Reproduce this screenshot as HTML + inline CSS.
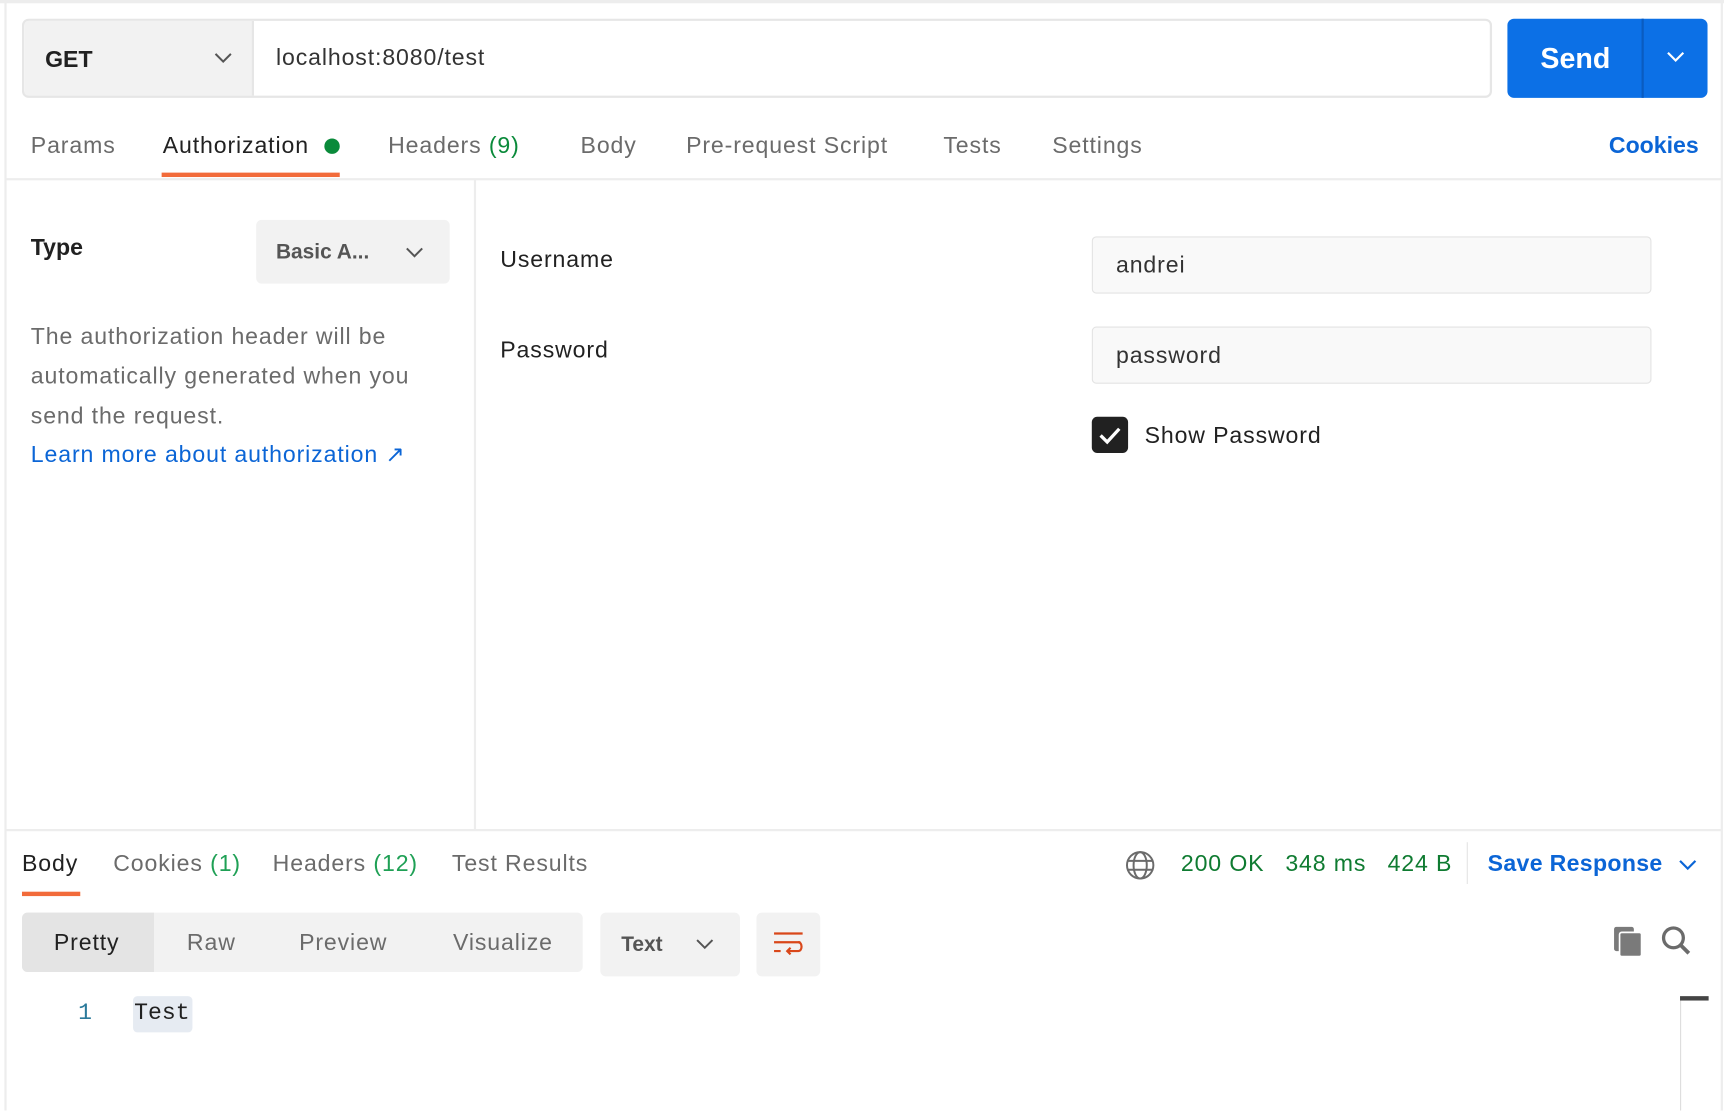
<!DOCTYPE html>
<html><head><meta charset="utf-8"><style>
*{box-sizing:border-box;margin:0;padding:0}
html,body{width:1724px;height:1110px;overflow:hidden;background:#fff}
#w{position:absolute;left:0;top:0;width:1568px;height:1010px;transform:scale(1.0995);transform-origin:0 0;font-family:"Liberation Sans",sans-serif;color:#212121}
.a{position:absolute;white-space:nowrap}
.r{letter-spacing:0.8px}
.t{font-size:21px;color:#6b6b6b;letter-spacing:0.8px}
.g{color:#0a8a3a}
.box{position:absolute;background:#f2f2f2;border-radius:5px}
</style></head><body><div id="w">
<div class="a" style="left:0;top:0;width:1568px;height:3px;background:#ededed"></div>
<div class="a" style="left:4px;top:0;width:2px;height:1010px;background:#ededed"></div>
<div class="a" style="left:1565px;top:0;width:2px;height:1010px;background:#ededed"></div>

<div class="a" style="left:20px;top:17px;width:1337px;height:72px;border:2px solid #e6e6e6;border-radius:6px;overflow:hidden">
 <div class="a" style="left:0;top:0;width:209px;height:68px;background:#f2f2f2;border-right:2px solid #e6e6e6"></div>
 <div class="a" style="left:19px;top:24px;font-size:21px;font-weight:bold">GET</div>
 <svg class="a" style="left:172px;top:28px" width="18" height="12"><path d="M2 2l7 7 7-7" fill="none" stroke="#555" stroke-width="1.8"/></svg>
 <div class="a r" style="left:229px;top:22px;font-size:21px;color:#333">localhost:8080/test</div>
</div>
<div class="a" style="left:1371px;top:17px;width:182px;height:72px;background:#0c70e6;border-radius:6px">
 <div class="a" style="left:30px;top:21px;font-size:26px;font-weight:bold;color:#fff">Send</div>
 <div class="a" style="left:122px;top:0;width:2px;height:72px;background:#0a5cc0"></div>
 <svg class="a" style="left:144px;top:29px" width="18" height="12"><path d="M2 2l7 7 7-7" fill="none" stroke="#fff" stroke-width="2"/></svg>
</div>

<div class="a t" style="left:28px;top:121px">Params</div>
<div class="a t" style="left:148px;top:121px;color:#212121">Authorization</div>
<div class="a" style="left:295px;top:126px;width:14px;height:14px;border-radius:50%;background:#0a8a3a"></div>
<div class="a" style="left:147px;top:157px;width:162px;height:4px;background:#f26b3a"></div>
<div class="a t" style="left:353px;top:121px">Headers <span class="g">(9)</span></div>
<div class="a t" style="left:528px;top:121px">Body</div>
<div class="a t" style="left:624px;top:121px">Pre-request Script</div>
<div class="a t" style="left:858px;top:121px">Tests</div>
<div class="a t" style="left:957px;top:121px">Settings</div>
<div class="a" style="right:23px;top:121px;font-size:21px;font-weight:bold;color:#0b65d6">Cookies</div>
<div class="a" style="left:5px;top:162px;width:1561px;height:2px;background:#ededed"></div>

<div class="a" style="left:431px;top:163px;width:2px;height:592px;background:#ededed"></div>
<div class="a" style="left:28px;top:214px;font-size:21px;font-weight:bold">Type</div>
<div class="box" style="left:233px;top:200px;width:176px;height:58px"></div>
<div class="a" style="left:251px;top:219px;font-size:19px;font-weight:bold;color:#555">Basic A...</div>
<svg class="a" style="left:368px;top:224px" width="18" height="12"><path d="M2 2l7 7 7-7" fill="none" stroke="#555" stroke-width="1.8"/></svg>
<div class="a t" style="left:28px;top:289px;line-height:36px;white-space:normal;width:375px">The authorization header will be automatically generated when you send the request.</div>
<div class="a r" style="left:28px;top:401px;font-size:21px;color:#0b65d6">Learn more about authorization ↗</div>

<div class="a r" style="left:455px;top:225px;font-size:21px">Username</div>
<div class="a r" style="left:455px;top:307px;font-size:21px">Password</div>
<div class="a" style="left:993px;top:215px;width:509px;height:52px;background:#f9f9f9;border:1.5px solid #e3e3e3;border-radius:4px"></div>
<div class="a r" style="left:1015px;top:230px;font-size:21px;color:#333">andrei</div>
<div class="a" style="left:993px;top:297px;width:509px;height:52px;background:#f9f9f9;border:1.5px solid #e3e3e3;border-radius:4px"></div>
<div class="a r" style="left:1015px;top:312px;font-size:21px;color:#333">password</div>
<div class="a" style="left:993px;top:379px;width:33px;height:33px;background:#212121;border-radius:5px"></div>
<svg class="a" style="left:993px;top:379px" width="33" height="33"><path d="M8 17l6 6 11-12" fill="none" stroke="#fff" stroke-width="3"/></svg>
<div class="a r" style="left:1041px;top:385px;font-size:21px">Show Password</div>

<div class="a" style="left:5px;top:754px;width:1561px;height:2px;background:#ededed"></div>
<div class="a t" style="left:20px;top:774px;color:#212121">Body</div>
<div class="a" style="left:20px;top:811px;width:53px;height:4px;background:#f26b3a"></div>
<div class="a t" style="left:103px;top:774px">Cookies <span style="color:#1fa055">(1)</span></div>
<div class="a t" style="left:248px;top:774px">Headers <span style="color:#1fa055">(12)</span></div>
<div class="a t" style="left:411px;top:774px">Test Results</div>
<svg class="a" style="left:1023px;top:773px" width="28" height="28"><g fill="none" stroke="#6b6b6b" stroke-width="1.8"><circle cx="14" cy="14" r="12"/><ellipse cx="14" cy="14" rx="6" ry="12"/><path d="M2.5 10h23M2.5 18h23"/></g></svg>
<div class="a r" style="left:1074px;top:774px;font-size:21px;color:#0f7b31">200 OK</div>
<div class="a r" style="left:1169px;top:774px;font-size:21px;color:#0f7b31">348 ms</div>
<div class="a r" style="left:1262px;top:774px;font-size:21px;color:#0f7b31">424 B</div>
<div class="a" style="left:1334px;top:766px;width:1px;height:38px;background:#e3e3e3"></div>
<div class="a" style="left:1353px;top:774px;font-size:21px;font-weight:bold;color:#0b65d6;letter-spacing:0.3px">Save Response</div>
<svg class="a" style="left:1526px;top:781px" width="18" height="12"><path d="M2 2l7 7 7-7" fill="none" stroke="#0b65d6" stroke-width="2"/></svg>

<div class="box" style="left:20px;top:830px;width:510px;height:54px"></div>
<div class="a" style="left:20px;top:830px;width:120px;height:54px;background:#e4e4e4;border-radius:5px 0 0 5px"></div>
<div class="a t" style="left:49px;top:846px;color:#212121">Pretty</div>
<div class="a t" style="left:170px;top:846px">Raw</div>
<div class="a t" style="left:272px;top:846px">Preview</div>
<div class="a t" style="left:412px;top:846px">Visualize</div>
<div class="box" style="left:546px;top:830px;width:127px;height:58px"></div>
<div class="a" style="left:565px;top:849px;font-size:19px;font-weight:bold;color:#555">Text</div>
<svg class="a" style="left:632px;top:853px" width="18" height="12"><path d="M2 2l7 7 7-7" fill="none" stroke="#555" stroke-width="1.8"/></svg>
<div class="box" style="left:688px;top:830px;width:58px;height:58px"></div>
<svg class="a" style="left:702px;top:846px" width="30" height="28"><g fill="none" stroke="#d9471a" stroke-width="2"><path d="M2 3h26M2 11h24M2 19h6"/><path d="M24 11c4 0 4 8 0 8h-10M17 16l-3 3 3 3"/></g></svg>
<svg class="a" style="left:1466px;top:841px" width="30" height="30"><rect x="2" y="2" width="18" height="22" rx="2" fill="#7a7a7a"/><rect x="7" y="7" width="20" height="22" rx="2" fill="#7a7a7a" stroke="#fff" stroke-width="1.5"/></svg>
<svg class="a" style="left:1510px;top:841px" width="30" height="30"><circle cx="12" cy="12" r="9" fill="none" stroke="#6b6b6b" stroke-width="3"/><path d="M19 19l7 7" stroke="#6b6b6b" stroke-width="3.5"/></svg>

<div class="a" style="left:71px;top:911px;font-size:21px;font-family:'Liberation Mono',monospace;color:#2b7a9b">1</div>
<div class="a" style="left:121px;top:906px;width:54px;height:33px;background:#e6ebf2;border-radius:4px"></div>
<div class="a" style="left:122px;top:911px;font-size:21px;font-family:'Liberation Mono',monospace">Test</div>
<div class="a" style="left:1528px;top:907px;width:1px;height:103px;background:#ddd"></div>
<div class="a" style="left:1528px;top:906px;width:26px;height:4px;background:#444"></div>
</div></body></html>
